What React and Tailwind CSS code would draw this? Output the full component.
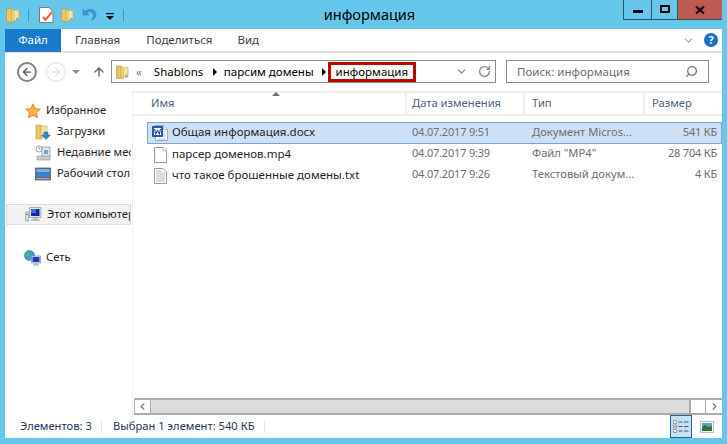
import { ChevronDown, ChevronLeft, ChevronRight, RotateCw, ArrowLeft, ArrowRight, ArrowUp, Search } from 'lucide-react';

const FONT = { fontFamily: '"Noto Sans", "Open Sans", sans-serif' };

const FILES = [
  { name: 'Общая информация.docx', date: '04.07.2017 9:51', type: 'Документ Micros...', size: '541 КБ', icon: 'word', selected: true },
  { name: 'парсер доменов.mp4', date: '04.07.2017 9:39', type: 'Файл "MP4"', size: '28 704 КБ', icon: 'blank' },
  { name: 'что такое брошенные домены.txt', date: '04.07.2017 9:26', type: 'Текстовый докум...', size: '4 КБ', icon: 'text' },
];

function FolderIcon({ className = 'w-[14px] h-[16px]' }) {
  return (
    <svg viewBox="0 0 14 16" className={`shrink-0 ${className}`}>
      <path d="M0.500 1.500h5l1 1.500v12h-6z" fill="#e8c860" stroke="#b8973a" strokeWidth="0.7" />
      <path d="M5.500 3h7.500v10.500h-7.500z" fill="#f4e4a0" stroke="#c9a94c" strokeWidth="0.7" />
      <path d="M5.500 3l2.500 1.500v11l-2.500-1.500z" fill="#efd27a" stroke="#c9a94c" strokeWidth="0.5" />
      <path d="M10 11h2.500v2.500h-2.500z" fill="#6fb0d8" />
    </svg>
  );
}

function StarIcon() {
  return (
    <svg viewBox="0 0 16 16" className="w-4 h-4 shrink-0">
      <path d="M8 0.800l2.200 4.800 5.200.6-3.900 3.500 1.100 5.200L8 12.200l-4.600 2.700 1.100-5.200L.6 6.200l5.200-.6z" fill="#fbb540" stroke="#e07a28" strokeWidth="0.8" />
    </svg>
  );
}

function DownloadsIcon() {
  return (
    <svg viewBox="0 0 16 16" className="w-4 h-4 shrink-0">
      <path d="M1 1h5l1 1v13H1z" fill="#e8c860" stroke="#b8973a" strokeWidth="0.6" />
      <path d="M6 2h6v11H6z" fill="#f4e4a0" stroke="#c9a94c" strokeWidth="0.6" />
      <path d="M9 8h4v3h2.500l-4.500 4.500L6.500 11H9z" fill="#2a8ad8" stroke="#1a5c9e" strokeWidth="0.5" />
    </svg>
  );
}

function RecentIcon() {
  return (
    <svg viewBox="0 0 16 16" className="w-4 h-4 shrink-0">
      <circle cx="4" cy="4" r="3" fill="#fff" stroke="#8a8a8a" strokeWidth="0.8" />
      <path d="M4 2.200V4h1.600" fill="none" stroke="#555" strokeWidth="0.6" />
      <path d="M7 2h8v10H7z" fill="#dfe6ea" stroke="#8a959c" strokeWidth="0.7" />
      <path d="M9 5h4v4H9z" fill="#6aa6d8" />
      <path d="M2 11h13v4H2z" fill="#c9cdd0" stroke="#8a8f92" strokeWidth="0.6" />
    </svg>
  );
}

function DesktopIcon() {
  return (
    <svg viewBox="0 0 16 14" className="w-4 h-[14px] shrink-0">
      <path d="M0.500 1h15v12h-15z" fill="#5d6b78" stroke="#56606a" strokeWidth="0.8" />
      <path d="M1.500 2h13v8h-13z" fill="#3f7fd0" />
      <path d="M1.500 2h13v3H1.500z" fill="#7db0e6" />
      <path d="M1.500 11h13v1.200h-13z" fill="#a9b2ba" />
    </svg>
  );
}

function ComputerIcon() {
  return (
    <svg viewBox="0 0 17 15" className="w-[17px] h-[15px] shrink-0">
      <path d="M0.500 5h3v9h-3z" fill="#dcdcdc" stroke="#7f8a80" strokeWidth="0.6" />
      <path d="M1 7h2v1H1z" fill="#3aa050" />
      <path d="M4.500 0.500h11.500v10h-11.500z" fill="#e0e2e4" stroke="#8e9499" strokeWidth="0.7" />
      <path d="M6 2h8.500v7H6z" fill="#0e28a8" />
      <path d="M6 2h5v4H6z" fill="#3f6fe0" />
      <path d="M8 11h5v1.500h2V14H6v-1.500h2z" fill="#b8bcc0" />
    </svg>
  );
}

function NetworkIcon() {
  return (
    <svg viewBox="0 0 17 16" className="w-[17px] h-4 shrink-0">
      <circle cx="5.500" cy="5.500" r="5" fill="#3f9be0" stroke="#2a6fa8" strokeWidth="0.6" />
      <path d="M2 3.500c2-1.500 3.500-.5 4 1-1 1.500-2.500 2-4 1.500zM6 8c1.500-1 3-.5 3 .5-.5 1.200-2 1.800-3 1.500z" fill="#58b848" />
      <path d="M7.500 6h9v7h-9z" fill="#dfe3e6" stroke="#7f888f" strokeWidth="0.7" />
      <path d="M8.500 7h7v5h-7z" fill="#1c3fc0" />
      <path d="M10.500 13.500h3v1h1.500v1h-6v-1h1.500z" fill="#aab0b5" />
    </svg>
  );
}

function WordIcon() {
  return (
    <svg viewBox="0 0 16 16" className="w-4 h-4 shrink-0">
      <path d="M3.500 0.500h8l4 4v11h-12z" fill="#fff" stroke="#8a929a" strokeWidth="0.8" />
      <path d="M11.500 .5v4h4" fill="#e8ecf0" stroke="#8a929a" strokeWidth="0.6" />
      <path d="M11 7h3M11 9h3M11 11h3M6 14h8" stroke="#8fb4dc" strokeWidth="0.8" />
      <path d="M0.500 1.500h10v10h-10z" fill="#1f5fb0" stroke="#123f80" strokeWidth="0.8" />
      <path d="M2 3h7v7H2z" fill="#fff" />
      <path d="M2.500 4l1.200 5 1.800-3.600L7.300 9l1.200-5" fill="none" stroke="#1a4f9c" strokeWidth="1.100" />
    </svg>
  );
}

function BlankIcon() {
  return (
    <svg viewBox="0 0 13 16" className="w-[13px] h-4 shrink-0">
      <path d="M0.500 0.500h8.500l3.500 3.500v11.500h-12z" fill="#fff" stroke="#8c8c8c" strokeWidth="0.9" />
      <path d="M9 .5V4h3.500" fill="#f0f0f0" stroke="#a8a8a8" strokeWidth="0.7" />
    </svg>
  );
}

function TextIcon() {
  return (
    <svg viewBox="0 0 13 16" className="w-[13px] h-4 shrink-0">
      <path d="M0.500 0.500h8.500l3.500 3.500v11.500h-12z" fill="#fff" stroke="#8c8c8c" strokeWidth="0.9" />
      <path d="M2 3h6M2 5h9M2 7h9M2 9h9M2 11h9M2 13h9" stroke="#9fb8d0" strokeWidth="0.9" />
    </svg>
  );
}

function FileIcon({ kind }) {
  if (kind === 'word') return <WordIcon />;
  if (kind === 'text') return <TextIcon />;
  return <BlankIcon />;
}

function QuickBar() {
  return (
    <div className="flex items-center w-[135px] pl-[6px] pt-[1px]">
      <FolderIcon />
      <div className="w-px h-3 bg-[#3f9cbd] ml-[8px]" />
      <svg viewBox="0 0 15 16" className="w-[15px] h-4 ml-[10px]">
        <path d="M0.500 0.500h9.500l4 4v11h-13.500z" fill="#fff" stroke="#6f6f6f" strokeWidth="0.9" />
        <path d="M4 10l2.500 3L13 5" fill="none" stroke="#e8663c" strokeWidth="2" />
      </svg>
      <FolderIcon className="w-[13px] h-4 ml-[7px]" />
      <svg viewBox="0 0 15 14" className="w-[15px] h-[14px] ml-[8px]">
        <path d="M1 1v6h6L4.800 4.800C7.500 3 11 4 11.500 7c.3 2-.8 4-2.500 5.500 3.500-1 5.200-3.500 5-6.500C13.600 1.500 8 -.5 3.300 3.300z" fill="#3f94dc" stroke="#2a70b5" strokeWidth="0.4" />
      </svg>
      <svg viewBox="0 0 8 8" className="w-2 h-2 ml-[9px] mt-[3px]">
        <path d="M0 0h8v1.200H0zM0 3h8L4 7z" fill="#111" />
      </svg>
      <div className="w-px h-3 bg-[#3f9cbd] ml-[9px]" />
    </div>
  );
}

function WindowButtons() {
  return (
    <div className="flex items-start h-[20px] border-b border-[#2e5566] mr-[5px]">
      <div className="w-[28px] h-[19px] flex items-center justify-center border-l border-[#2e5566]">
        <div className="w-[10px] h-[3px] bg-black mt-[3px]" />
      </div>
      <div className="w-[26px] h-[19px] flex items-start justify-center pt-[5px] border-l border-[#2e5566]">
        <div className="w-[10px] h-[8px] border-2 border-black" />
      </div>
      <div className="w-[45px] h-[19px] flex items-center justify-center bg-[#be5a50] border-l border-[#2e5566]">
        <svg viewBox="0 0 10 8" className="w-[10px] h-2">
          <path d="M1 0.500l8 7M9 0.500l-8 7" stroke="#000" strokeWidth="2" />
        </svg>
      </div>
    </div>
  );
}

function Tabs() {
  return (
    <div className="flex items-center h-[24px] border-b-2 border-[#dfe0e1] text-[#3c3c3c]">
      <div className="w-[56px] h-[23px] flex items-center justify-center bg-[#1979ca] text-white">Файл</div>
      <span className="ml-[14px]">Главная</span>
      <span className="ml-[26px]">Поделиться</span>
      <span className="ml-[25px]">Вид</span>
      <ChevronDown size={13} strokeWidth={2} className="ml-auto text-[#a3a3a3]" />
      <div className="w-[14px] h-[14px] rounded-full bg-[#1a70c8] text-white text-[11px] font-bold flex items-center justify-center mx-[4px] ml-[9px]">?</div>
    </div>
  );
}

function AddressRow() {
  return (
    <div className="flex items-start h-[38px] pt-[7px] pr-[12px]">
      <div className="w-[20px] h-[20px] mt-[2px] ml-[12px] rounded-full border-2 border-[#7f7f7f] flex items-center justify-center">
        <ArrowLeft size={12} strokeWidth={2.5} className="text-[#555]" />
      </div>
      <div className="w-[20px] h-[20px] mt-[2px] ml-[9px] rounded-full border border-[#d8d8d8] flex items-center justify-center">
        <ArrowRight size={12} strokeWidth={2} className="text-[#d0d0d0]" />
      </div>
      <div className="mt-[10px] ml-[6px] w-0 h-0 border-x-4 border-x-transparent border-t-[4px] border-t-[#8f8f8f]" />
      <ArrowUp size={14} strokeWidth={2.5} className="text-[#6e6e6e] mt-[5px] ml-[12px]" />
      <div className="flex items-center h-[23px] w-[385px] ml-[5px] border border-[#8a8a8a] text-black whitespace-nowrap">
        <FolderIcon className="w-[13px] h-[16px] ml-[4px]" />
        <span className="ml-[7px] text-[#777]">«</span>
        <span className="ml-[12px] w-[50px]">Shablons</span>
        <div className="ml-[9px] w-0 h-0 border-y-4 border-y-transparent border-l-[4px] border-l-black" />
        <span className="ml-[7px] w-[88px]">парсим домены</span>
        <div className="ml-[10px] w-0 h-0 border-y-4 border-y-transparent border-l-[4px] border-l-black" />
        <span className="ml-[2px] h-[20px] w-[88px] border-[3px] border-[#b20d00] flex items-center justify-center">информация</span>
        <ChevronDown size={13} strokeWidth={2.5} className="ml-[39px] text-[#8a8a8a]" />
        <RotateCw size={13} strokeWidth={2.5} className="ml-[10px] text-[#8a8a8a]" />
      </div>
      <div className="flex items-center h-[23px] w-[203px] ml-[10px] border border-[#8a8a8a] text-[#6d6d6d] px-[10px]">
        <span>Поиск: информация</span>
        <Search size={13} strokeWidth={2.5} className="ml-auto -scale-x-100 text-[#777]" />
      </div>
    </div>
  );
}

function NavItem({ icon, label, sub }) {
  return (
    <div className={`flex items-center h-[21px] whitespace-nowrap overflow-hidden ${sub ? 'pl-[29px] gap-[6px]' : 'pl-[19px] gap-[5px]'}`}>
      <span className="flex justify-center w-[17px] shrink-0">{icon}</span>
      <span className="pb-px">{label}</span>
    </div>
  );
}

function NavPane() {
  return (
    <div className="w-[128px] shrink-0 border-r border-[#f0f0f0] text-[#1e1e1e] text-[11.2px] pt-[9px]">
      <div className="w-[126px]">
        <NavItem icon={<StarIcon />} label="Избранное" />
        <NavItem sub icon={<DownloadsIcon />} label="Загрузки" />
        <NavItem sub icon={<RecentIcon />} label="Недавние места" />
        <NavItem sub icon={<DesktopIcon />} label="Рабочий стол" />
        <div className="flex items-center h-[21px] mt-[20px] ml-px border border-[#dcdcdc] bg-[#f2f2f2] whitespace-nowrap overflow-hidden pl-[18px] gap-[5px]">
          <ComputerIcon />
          <span>Этот компьютер</span>
        </div>
        <div className="mt-[22px]">
          <NavItem icon={<NetworkIcon />} label="Сеть" />
        </div>
      </div>
    </div>
  );
}

function FileRow({ file }) {
  return (
    <div className={`flex items-center whitespace-nowrap ${file.selected ? 'h-[22px] border border-[#7da2ce] bg-[#cce0f8]' : 'h-[21px] border border-transparent'}`}>
      <span className="w-[16px] ml-[4px] flex justify-center shrink-0"><FileIcon kind={file.icon} /></span>
      <span className="w-[240px] ml-[4px] pb-[2px] text-[#1e1e1e]">{file.name}</span>
      <span className="w-[120px] pb-[2px] text-[11px] tracking-[-0.2px] text-[#6d6d6d]">{file.date}</span>
      <span className="w-[112px] pb-[2px] text-[11.2px] text-[#6d6d6d]">{file.type}</span>
      <span className="w-[73px] pb-[2px] text-right text-[11px] tracking-[-0.2px] text-[#6d6d6d]">{file.size}</span>
    </div>
  );
}

function FileList() {
  return (
    <div className="flex-1 flex flex-col min-w-0">
      <div className="relative flex items-stretch h-[25px] border-y-2 border-y-[#eeeeee] text-[#4c607a] text-[11.2px]">
        <div className="absolute left-[139px] -top-[1px] w-0 h-0 border-x-[4px] border-x-transparent border-b-[4px] border-b-[#5c6f80]" />
        <div className="w-[274px] flex items-center pl-[18px] border-r-2 border-[#eeeeee]">Имя</div>
        <div className="w-[118px] flex items-center pl-[5px] border-r-2 border-[#eeeeee]">Дата изменения</div>
        <div className="w-[120px] flex items-center pl-[7px] border-r-2 border-[#eeeeee]">Тип</div>
        <div className="flex-1 flex items-center pl-[7px]">Размер</div>
      </div>
      <div className="flex-1 pt-[6px] pl-[14px]">
        {FILES.map((f) => <FileRow key={f.name} file={f} />)}
      </div>
      <div className="flex items-stretch h-[17px] border-y-2 border-[#ababab] ml-px">
        <div className="w-[17px] flex items-center justify-center border-x border-[#ababab] bg-white">
          <ChevronLeft size={11} strokeWidth={2.5} className="text-[#777]" />
        </div>
        <div className="w-[540px] bg-[#dcdcdc] border-r-2 border-[#ababab]" />
        <div className="flex-1 bg-white" />
        <div className="w-[17px] flex items-center justify-center border-l border-[#ababab] bg-white">
          <ChevronRight size={11} strokeWidth={2.5} className="text-[#777]" />
        </div>
      </div>
    </div>
  );
}

function StatusBar() {
  return (
    <div className="flex items-center h-[23px] text-[#1d3557] text-[11.2px]">
      <span className="ml-[15px] w-[71px] whitespace-nowrap">Элементов: 3</span>
      <div className="w-px h-[13px] bg-[#e6e6e6] ml-[10px]" />
      <span className="ml-[11px] w-[143px] whitespace-nowrap">Выбран 1 элемент: 540 КБ</span>
      <div className="w-px h-[13px] bg-[#e6e6e6] ml-[8px]" />
      <div className="ml-auto flex items-center h-[23px]">
        <div className="w-[22px] h-[23px] bg-[#c4e2f5] border border-[#2d5f8f] flex items-center justify-center">
          <svg viewBox="0 0 16 13" className="w-4 h-[13px]">
            <path d="M0.500 0.500h3v3h-3zM0.500 5h3v3h-3zM0.500 9.500h3v3h-3z" fill="#fff" stroke="#777" strokeWidth="0.7" />
            <path d="M1.500 6h1v1h-1z" fill="#d23030" />
            <path d="M5.500 2h4M11 2h4.500M5.500 6.500h4M11 6.500h4.500M5.500 11h4M11 11h4.500" stroke="#40566e" strokeWidth="1" />
          </svg>
        </div>
        <svg viewBox="0 0 14 12" className="w-[14px] h-3 mx-[8px]">
          <path d="M0.500 0.500h13v11h-13z" fill="#fff" stroke="#a4aab2" strokeWidth="0.8" />
          <path d="M2 2h10v8H2z" fill="#58a8b8" />
          <path d="M2 6l3-2 3 2 4-1v5H2z" fill="#2f7040" />
        </svg>
      </div>
    </div>
  );
}

export default function App() {
  return (
    <div className="w-[727px] h-[444px] bg-[#65c8ea] overflow-hidden flex flex-col text-[11.5px]" style={FONT}>
      <div className="flex items-start h-[29px]">
        <div className="self-center"><QuickBar /></div>
        <div className="flex-1 text-center text-[14.5px] leading-[28px] text-black pr-[19px]">информация</div>
        <WindowButtons />
      </div>
      <div className="mx-[5px] h-[409px] bg-white flex flex-col">
        <Tabs />
        <AddressRow />
        <div className="flex flex-1 min-h-0">
          <NavPane />
          <FileList />
        </div>
        <StatusBar />
      </div>
    </div>
  );
}
